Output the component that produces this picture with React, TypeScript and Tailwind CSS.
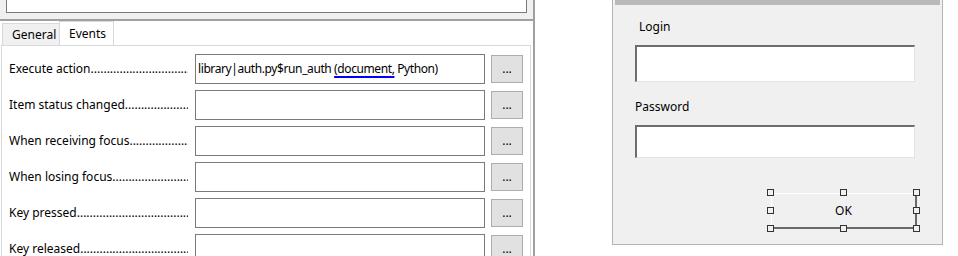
import React from "react";

/* EVENT ROWS */
const EVENTS = [
  { label: "Execute action", value: true },
  { label: "Item status changed" },
  { label: "When receiving focus" },
  { label: "When losing focus" },
  { label: "Key pressed" },
  { label: "Key released" },
];

const DOTS = ".".repeat(120);

const Handle: React.FC<{ className: string }> = ({ className }) => (
  <div className={`absolute w-[7px] h-[7px] border border-[#333] bg-[#f0f0f0] ${className}`} />
);

const App: React.FC = () => {
  return (
    <div
      className="flex w-[958px] h-[256px] overflow-hidden bg-white text-[12px] text-black"
      style={{ fontFamily: '"Segoe UI", "Noto Sans", sans-serif' }}
    >
      {/* PROPERTIES PANEL */}
      <div className="w-[535px] h-full flex flex-col border-r-2 border-[#a0a0a0] shrink-0">
        <div className="h-[19px] bg-[#f0f0f0] px-[6px] shrink-0">
          <div className="h-[13px] bg-white border-x border-b border-[#7a7a7a]" />
        </div>
        <div className="h-[2px] bg-[#a0a0a0] shrink-0" />

        {/* TABS */}
        <div className="flex items-end h-[24px] pl-[2px] shrink-0">
          <div className="w-[58px] h-[22px] bg-[#f0f0f0] border-x border-t border-[#d9d9d9] flex items-center pl-[9px] pt-[1px]">
            General
          </div>
          <div className="w-[55px] h-[24px] bg-white border-x border-t border-[#d9d9d9] -ml-px flex items-center pl-[9px]">
            Events
          </div>
        </div>

        {/* TAB CONTENT */}
        <div className="ml-[1px] w-[530px] flex-1 border-x border-t border-[#d9d9d9] pt-[8px] pl-[7px] flex flex-col gap-[6px]">
          {EVENTS.map((e) => (
            <div key={e.label} className="flex items-center h-[30px] shrink-0">
              <div className="w-[179px] whitespace-nowrap overflow-hidden">
                {e.label}
                {DOTS}
              </div>
              <div className="ml-[7px] w-[290px] h-[30px] border border-[#7a7a7a] bg-white flex items-center pl-[2px] whitespace-nowrap">
                {e.value && (
                  <span className="tracking-[-0.4px]">
                    library|auth.py$run_auth{" "}
                    <span className="underline decoration-[#0000ff] decoration-2 underline-offset-[3px]">
                      (document,
                    </span>{" "}
                    Python)
                  </span>
                )}
              </div>
              <div className="ml-[6px] w-[32px] h-[28px] bg-[#e1e1e1] border border-[#adadad] flex items-center justify-center">
                ...
              </div>
            </div>
          ))}
        </div>
      </div>

      {/* FORM PREVIEW */}
      <div className="ml-[77px] w-[331px] h-[245px] bg-[#f0f0f0] border-x border-b border-[#b4b4b4] flex flex-col shrink-0">
        <div className="h-[5px] mx-[2px] bg-[#b9b9b9]" />
        <div className="pl-[22px] flex flex-col">
          <div className="mt-[14px] pl-[4px] leading-[16px]">Login</div>
          <div className="mt-[10px] w-[280px] h-[37px] bg-white border-t-2 border-l-2 border-r border-b border-t-[#6d6d6d] border-l-[#6d6d6d] border-r-[#e3e3e3] border-b-[#e3e3e3]" />
          <div className="mt-[17px] leading-[16px]">Password</div>
          <div className="mt-[10px] w-[280px] h-[33px] bg-white border-t-2 border-l-2 border-r border-b border-t-[#6d6d6d] border-l-[#6d6d6d] border-r-[#e3e3e3] border-b-[#e3e3e3]" />
          <div className="relative mt-[35px] ml-[136px] w-[146px] h-[36px]">
            <div className="w-full h-full border-t border-l border-white border-r-2 border-b-2 border-r-[#696969] border-b-[#696969] flex items-center justify-center">
              OK
            </div>
            <Handle className="-left-[4px] -top-[4px]" />
            <Handle className="left-[69px] -top-[4px]" />
            <Handle className="-right-[3px] -top-[4px]" />
            <Handle className="-left-[4px] top-[14px]" />
            <Handle className="-right-[3px] top-[14px]" />
            <Handle className="-left-[4px] -bottom-[3px]" />
            <Handle className="left-[69px] -bottom-[3px]" />
            <Handle className="-right-[3px] -bottom-[3px]" />
          </div>
        </div>
      </div>
    </div>
  );
};

export default App;
